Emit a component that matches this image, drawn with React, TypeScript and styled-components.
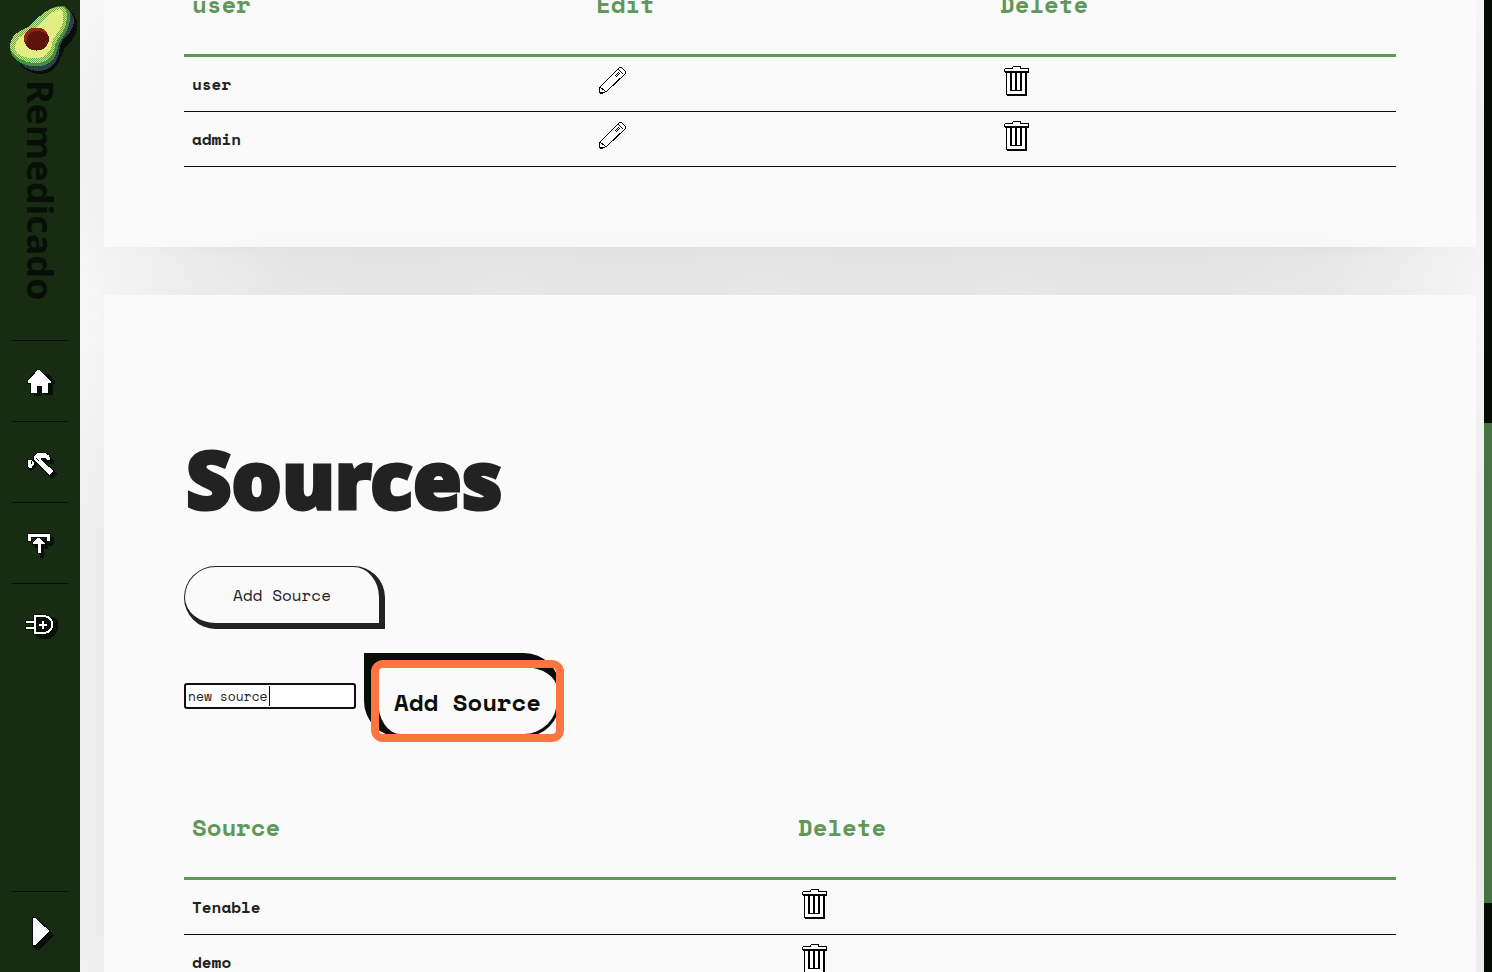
import React from "react";
import styled, { createGlobalStyle } from "styled-components";

const mono = `"Space Mono", "Liberation Mono", monospace`;

const GlobalStyle = createGlobalStyle`
  * { box-sizing: border-box; }
  html, body, #root { height: 100%; }
  body { margin: 0; overflow: hidden; background: #fafafa; color: #222; font-family: ${mono}; font-size: 16px; }
`;

const Shell = styled.div`
  display: flex;
  height: 100vh;
  overflow: hidden;
`;

const Sidebar = styled.nav`
  position: relative;
  z-index: 1;
  flex: 0 0 80px;
  display: flex;
  flex-direction: column;
  align-items: center;
  background: #182c14;
`;

const Brand = styled.a`
  display: flex;
  flex-direction: column;
  align-items: center;
  height: 340px;
  text-decoration: none;
  color: #080f07;
`;

const BrandName = styled.span`
  writing-mode: vertical-rl;
  font: 700 36px/56px "Noto Sans", sans-serif;
`;

const NavLink = styled.a<{ $last?: boolean }>`
  display: flex;
  align-items: center;
  justify-content: center;
  width: 56px;
  height: 81px;
  margin-top: ${(p) => (p.$last ? "auto" : "0")};
  padding-right: 2px;
  border-top: 1px solid #080f07;
`;

const Icon = styled.svg`
  display: block;
  overflow: visible;
`;

const Content = styled.main`
  flex: 1;
  min-width: 0;
  display: flex;
  flex-direction: column;
  gap: 48px;
  padding: 0 8px 0 24px;
  overflow: hidden;
`;

const Panel = styled.section`
  flex: none;
  padding: 0 80px 80px;
  background: #fafafa;
  box-shadow: 0 50px 180px -50px #00000033;
`;

const UsersPanel = styled(Panel)`
  margin-top: -46px;
`;

const SourcesPanel = styled(Panel)`
  padding-top: 128px;
`;

const Table = styled.table`
  width: 100%;
  table-layout: fixed;
  border-collapse: separate;
  border-spacing: 0;
  text-align: left;
`;

const HeadCell = styled.th`
  height: 103px;
  padding: 0 8px;
  border-bottom: 3px solid #5f9857;
  color: #5f9857;
  font-size: 24px;
  line-height: 36px;
`;

const Cell = styled.td`
  height: 55px;
  padding: 0 8px;
  border-bottom: 1px solid #080f07;
  font-weight: 700;
`;

const IconButton = styled.button`
  display: block;
  margin-top: -6px;
  padding: 0;
  border: 0;
  background: none;
`;

const Title = styled.h1`
  margin: 0;
  padding: 0 2px 31px;
  font: 900 79px/112px "Noto Sans", sans-serif;
  color: #222;
  -webkit-text-stroke: 3px #222;
`;

const AddButton = styled.button`
  display: block;
  width: 201px;
  height: 63px;
  padding: 0;
  border: solid #222;
  border-width: 1px 6px 6px 1px;
  border-radius: 32px 32px 0 32px;
  background: #fafafa;
  color: #222;
  font: 400 16px/24px ${mono};
`;

const SourceForm = styled.form`
  display: flex;
  align-items: center;
  gap: 8px;
  padding: 24px 0 35px;
`;

const InputWrap = styled.div`
  position: relative;
  display: flex;
  margin-top: -4px;
`;

const SourceInput = styled.input`
  width: 172px;
  height: 26px;
  padding: 0 2px;
  border: 2px solid #101010;
  border-radius: 3px;
  background: #fff;
  color: #222;
  outline: 0;
  font: 400 13px/20px ${mono};
`;

const Caret = styled.span`
  position: absolute;
  top: 3px;
  left: 85px;
  width: 1px;
  height: 20px;
  background: #000;
`;

const SubmitFrame = styled.div`
  position: relative;
  width: 200px;
  height: 89px;
`;

const SubmitButton = styled.button`
  width: 196px;
  height: 84px;
  padding: 2px 0 0;
  border: solid #080f07;
  border-width: 14px 3px 3px 14px;
  border-radius: 0 36px 36px 36px;
  background: #fafafa;
  color: #080f07;
  font: 700 24px/36px ${mono};
  white-space: nowrap;
`;

const Highlight = styled.span`
  position: absolute;
  inset: 7px 0 0 7px;
  border: 8px solid #ff7542;
  border-radius: 12px;
  pointer-events: none;
`;

const ScrollTrack = styled.div`
  position: relative;
  z-index: 1;
  flex: 0 0 8px;
  display: flex;
  flex-direction: column;
  background: #050d04;
`;

const ScrollThumb = styled.div`
  height: 480px;
  margin-top: 423px;
  background: #467341;
`;

const Avocado = () => (
  <Icon width="80" height="80" viewBox="0 0 80 80" shapeRendering="crispEdges" aria-hidden="true">
    <defs>
      <pattern id="speckle" width="2" height="2" patternUnits="userSpaceOnUse">
        <path d="M0 0h1v1H0zM1 1h1v1H1z" fill="#6ba64c" />
      </pattern>
      <pattern id="slate" width="3" height="3" patternUnits="userSpaceOnUse">
        <path d="M0 0h1v1H0zM2 1h1v1H2z" fill="#1d2f38" />
      </pattern>
    </defs>
    <path d="M68 10q11 6 9 20-2 9-12 17-3 8-6 15-6 12-19 12-12 0-19-9z" fill="#080f07" />
    <path d="M68 9q6 5 6 13-1 9-11 18-4 6-4 14-5 16-20 17-10 0-17-6z" fill="#2f4552" />
    <path d="M68 9q6 5 6 13-1 9-11 18-4 6-4 14-5 16-20 17-10 0-17-6z" fill="url(#slate)" />
    <path d="M58 6h6q6 3 6 10 0 11-7 21-5 7-6 14-4 14-17 15-14 1-22-5-8-5-8-14 1-11 10-16 8-3 14-9 10-12 24-16" fill="#4c8d3d" />
    <path d="M57 7h6q4 2 4 8 0 11-7 21-5 6-5 12-4 14-17 15-13 0-21-6-7-5-7-12 1-9 10-14 8-3 14-9 10-12 23-15" fill="#d0e477" />
    <path d="M57 7h6q4 2 4 8 0 11-7 21-5 6-5 12-4 14-17 15-13 0-21-6-7-5-7-12 1-9 10-14 8-3 14-9 10-12 23-15" fill="url(#speckle)" />
    <path d="M58 11q4-1 4 6-1 10-7 17-5 6-5 12-3 10-13 11-12 0-18-4-4-4-2-9 2-6 9-9 8-3 14-9 9-11 18-15" fill="#e1ee82" stroke="#e1ee82" strokeWidth="3" />
    <ellipse cx="36.500" cy="39" rx="12.500" ry="11.500" fill="#5d130c" />
    <path d="M24 39q0-8 7-10 6-3 12 0 4 2 5 6-7-5-13-4-8 2-8 9l-2 2z" fill="#932317" />
  </Icon>
);

const HomeIcon = () => (
  <Icon width="32" height="32" viewBox="0 0 32 32" shapeRendering="crispEdges" aria-hidden="true">
    <path d="M18 9h8l6 8v2h-2v11h-8v-3h-3v4h-8v-6z" fill="#080f07" />
    <path d="M15 4h1l12 12v2h-3v10h-7v-7h-4v7H7V18H4v-2z" fill="#fff" stroke="#080f07" />
  </Icon>
);

const HammerIcon = () => (
  <Icon width="32" height="32" viewBox="0 0 32 32" shapeRendering="crispEdges" aria-hidden="true">
    <path d="m16 8 9 1 6 6v3h-4l-6-3 13 13-4 5h-2L14 19l-5 6-5-2z" fill="#080f07" />
    <path d="m10 11 5-5h7l4 3 2 4-2 2-5-3-3 1 12 11v2l-3 3h-1L14 17l-4-3z" fill="#fff" stroke="#080f07" />
    <path d="M6 13h3l2 3v3l-2 3H6l-2-2v-5z" fill="#fff" stroke="#080f07" />
    <path d="M8 15v3M13 12l3 3" stroke="#080f07" />
  </Icon>
);

const UploadIcon = () => (
  <Icon width="32" height="32" viewBox="0 0 32 32" shapeRendering="crispEdges" aria-hidden="true">
    <path d="M27 10h4v7l-3 2h-3l1 3h-5v9h-4v-8l-6-3 4-6z" fill="#080f07" />
    <path d="M4 6h23v8h-4v-4H8v4H4z" fill="#fff" stroke="#080f07" />
    <path d="M15 10h1l6 6v1h-4v9h-4v-9h-5v-1z" fill="#fff" stroke="#080f07" />
  </Icon>
);

const PlugIcon = () => (
  <Icon width="36" height="32" viewBox="-1 0 36 32" shapeRendering="crispEdges" aria-hidden="true">
    <path d="M31 10h3l2 4v7l-3 6-5 4H17l-4-4z" fill="#080f07" />
    <path d="M13 8h9q8 1 8 8.500t-8 8.500h-9z" fill="#080f07" stroke="#080f07" strokeWidth="4" />
    <path d="M3 14h9M3 20h9" stroke="#080f07" strokeWidth="4" />
    <path d="M13 8h9q8 1 8 8.500t-8 8.500h-9zM4 14h8M4 20h8M17 17h8M21 13v8" fill="none" stroke="#fff" strokeWidth="2" />
  </Icon>
);

const PlayIcon = () => (
  <Icon width="32" height="36" viewBox="0 0 32 36" shapeRendering="crispEdges" aria-hidden="true">
    <path d="m25 16 6 5-15 15h-3l-3-4z" fill="#080f07" />
    <path d="M9 3h3l15 14-14 14H9z" fill="#fff" stroke="#080f07" />
  </Icon>
);

const PencilIcon = () => (
  <Icon width="32" height="32" viewBox="0 0 32 32" shapeRendering="crispEdges" aria-hidden="true">
    <path d="M4 22 23 3l2-1 4 4v3L11 26l-4 2H4l-1-1v-4z" fill="#fff" stroke="#000" />
    <path d="m29 9-18 17M4 22l5 4M22 4l5 5M4 27h3M19 11l4-4M20 12l4-4" fill="none" stroke="#000" />
  </Icon>
);

const TrashIcon = () => (
  <Icon width="32" height="32" viewBox="0 0 32 32" shapeRendering="crispEdges" aria-hidden="true">
    <path d="M6 6h21v24l-1 1H7l-1-1z" fill="#000" />
    <path d="M7 8h18v21H7z" fill="#fff" />
    <path d="M5 3h7V2l1-1h7l1 1v1h7l1 1v3l-1 1H5L4 7V4z" fill="#000" />
    <path d="M5 4h8V2h7v2h8v2H5z" fill="#fff" />
    <path d="M10 8h12v18H10z" fill="#000" />
    <path d="M12 8h3v17h-3zM17 8h3v17h-3z" fill="#fff" />
  </Icon>
);

const navItems = [
  { label: "Home", icon: <HomeIcon /> },
  { label: "Tools", icon: <HammerIcon /> },
  { label: "Upload", icon: <UploadIcon /> },
  { label: "Connections", icon: <PlugIcon /> },
];

const DeleteButton = ({ name }: { name: string }) => (
  <IconButton type="button" aria-label={`Delete ${name}`}>
    <TrashIcon />
  </IconButton>
);

export default function App() {
  return (
    <>
      <GlobalStyle />
      <Shell>
        <Sidebar>
          <Brand href="#">
            <Avocado />
            <BrandName>Remedicado</BrandName>
          </Brand>
          {navItems.map((item) => (
            <NavLink key={item.label} href="#" aria-label={item.label}>
              {item.icon}
            </NavLink>
          ))}
          <NavLink href="#" aria-label="Expand" $last>
            <PlayIcon />
          </NavLink>
        </Sidebar>
        <Content>
          <UsersPanel>
            <Table>
              <thead>
                <tr>
                  <HeadCell>user</HeadCell>
                  <HeadCell>Edit</HeadCell>
                  <HeadCell>Delete</HeadCell>
                </tr>
              </thead>
              <tbody>
                {["user", "admin"].map((name) => (
                  <tr key={name}>
                    <Cell>{name}</Cell>
                    <Cell>
                      <IconButton type="button" aria-label={`Edit ${name}`}>
                        <PencilIcon />
                      </IconButton>
                    </Cell>
                    <Cell>
                      <DeleteButton name={name} />
                    </Cell>
                  </tr>
                ))}
              </tbody>
            </Table>
          </UsersPanel>
          <SourcesPanel>
            <Title>Sources</Title>
            <AddButton type="button">Add Source</AddButton>
            <SourceForm onSubmit={(e) => e.preventDefault()}>
              <InputWrap>
                <SourceInput aria-label="Source name" defaultValue="new source" />
                <Caret />
              </InputWrap>
              <SubmitFrame>
                <SubmitButton type="submit">Add Source</SubmitButton>
                <Highlight />
              </SubmitFrame>
            </SourceForm>
            <Table>
              <thead>
                <tr>
                  <HeadCell>Source</HeadCell>
                  <HeadCell>Delete</HeadCell>
                </tr>
              </thead>
              <tbody>
                {["Tenable", "demo"].map((name) => (
                  <tr key={name}>
                    <Cell>{name}</Cell>
                    <Cell>
                      <DeleteButton name={name} />
                    </Cell>
                  </tr>
                ))}
              </tbody>
            </Table>
          </SourcesPanel>
        </Content>
        <ScrollTrack>
          <ScrollThumb />
        </ScrollTrack>
      </Shell>
    </>
  );
}
